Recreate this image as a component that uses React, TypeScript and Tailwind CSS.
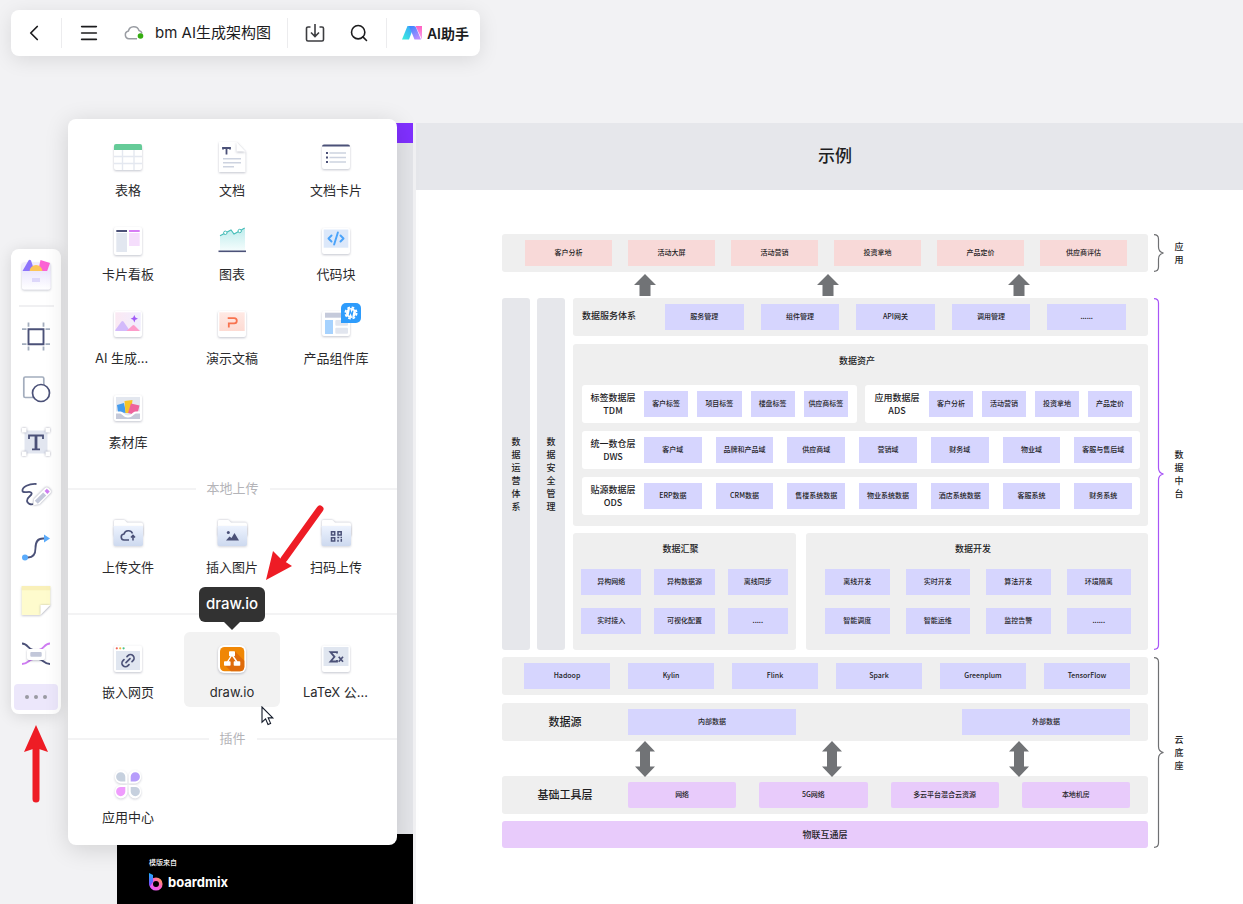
import type { ReactNode } from 'react';
import clsx from 'clsx';
import { ChevronLeft, CodeXml, Link2, Menu, Search } from 'lucide-react';

const INK = '#4b5178';

/* ---------- shared icon frame ---------- */

function Icon({ children }: { children: ReactNode }) {
  return (
    <svg
      viewBox="0 0 36 36"
      aria-hidden="true"
      className="w-9 h-9 shrink-0 overflow-visible"
      fill="none"
    >
      {children}
    </svg>
  );
}

// White paper card with a soft shadow, used under most of the icons
function Card({ y = 4, h = 27, rx = 2 }: { y?: number; h?: number; rx?: number }) {
  return (
    <rect
      x="4"
      y={y}
      width="28"
      height={h}
      rx={rx}
      fill="#fff"
      className="drop-shadow-[0_1px_1px_rgba(40,45,80,0.28)]"
    />
  );
}

/* ---------- insert panel icons ---------- */

const tableIcon = (
  <Icon>
    <Card y={6} h={25} />
    <path d="M4 7a2 2 0 0 1 2-2h24a2 2 0 0 1 2 2v4H4z" fill="#65cb98" />
    <path d="M4 17.500h28M4 24.500h28M12.500 11V31M24 11V31" stroke="#e4e8f0" strokeWidth="1.400" />
  </Icon>
);

const docIcon = (
  <Icon>
    <path
      d="M5 3h17.500l9 9.500V33H5z"
      fill="#fff"
      className="drop-shadow-[0_1px_1px_rgba(40,45,80,0.28)]"
    />
    <path d="M22.500 3v9.500h9z" fill="#fff" className="drop-shadow-[0_1px_1px_rgba(40,45,80,0.3)]" />
    <path d="M9 10.500V9h7v1.500M12.500 9v6.500" stroke={INK} strokeWidth="1.800" />
    <path d="M9 19.700h18M9 23.700h18M9 27.700h11" stroke="#cdd3e0" strokeWidth="1.500" />
  </Icon>
);

const docCardIcon = (
  <Icon>
    <Card y={6} h={24} />
    <path d="M4 7.500a2 2 0 0 1 2-2h24a2 2 0 0 1 2 2z" fill={INK} />
    <path d="M8 14h2M8 18.500h2M8 23h2" stroke={INK} strokeWidth="1.800" />
    <path d="M11.500 14H28M11.500 18.500H28M11.500 23H28" stroke="#cdd3e0" strokeWidth="1.500" />
  </Icon>
);

const kanbanIcon = (
  <Icon>
    <Card y={4} h={28} />
    <path d="M6.300 7H17v2H6.300z" fill={INK} />
    <path d="M19 7h10.700v2H19z" fill="#d77df5" />
    <path d="M6.300 10H17v19H6.300z" fill="#e2e7f0" />
    <path d="M19 10h10.700v13H19z" fill="#f5defc" />
  </Icon>
);

const chartIcon = (
  <Icon>
    <defs>
      <linearGradient id="chartFill" x1="0" y1="0" x2="0" y2="1">
        <stop offset="0" stopColor="#bdecec" />
        <stop offset="1" stopColor="#f6fdfd" />
      </linearGradient>
    </defs>
    <path d="M6 12.700L11.300 10 17 7l3 4 6-3.300L31 5v23H6z" fill="url(#chartFill)" />
    <path d="M6 12.700L11.300 10 17 7l3 4 6-3.300L30.700 5" stroke="#45bdb8" strokeWidth="1.100" />
    <circle cx="11.300" cy="9.800" r="1.700" fill="#fff" stroke="#45bdb8" />
    <circle cx="25.700" cy="8" r="1.700" fill="#fff" stroke="#45bdb8" />
    <path d="M4.500 28.300h27.500" stroke={INK} strokeWidth="1.600" />
  </Icon>
);

const codeIcon = (
  <Icon>
    <Card y={5} h={26} />
    <path d="M5.700 6.500h24.600v18.200H5.700z" fill="#dce8fa" />
    <CodeXml x={9} y={6.500} width={18} height={18} color="#4aa3fa" strokeWidth={2.6} />
  </Icon>
);

const aiImageIcon = (
  <Icon>
    <defs>
      <linearGradient id="aiSky" x1="0" y1="0" x2="1" y2="0">
        <stop offset="0" stopColor="#fbe9f3" />
        <stop offset="1" stopColor="#f0edfe" />
      </linearGradient>
    </defs>
    <Card y={4} h={26} />
    <path d="M5.300 5.300h25.400V24H5.300z" fill="url(#aiSky)" />
    <path d="M5.300 23L11.500 14.500q1-1.200 2 0L20 24H5.300z" fill="#d3bafb" />
    <path d="M16.500 24l6-5.500q1-1 2 0l5.500 5.500z" fill="#fd9cca" />
    <path d="M24.300 8l1.100 2.600L28 11.700l-2.600 1.100-1.100 2.600-1.100-2.600-2.600-1.100 2.600-1.100z" fill="#a05af7" />
  </Icon>
);

const slidesIcon = (
  <Icon>
    <defs>
      <linearGradient id="slideFill" x1="0" y1="0" x2="0" y2="1">
        <stop offset="0" stopColor="#ffe9e4" />
        <stop offset="1" stopColor="#fddbd3" />
      </linearGradient>
    </defs>
    <Card y={4} h={26} />
    <path d="M5.300 5.300h25.400V24H5.300z" fill="url(#slideFill)" />
    <path d="M13.700 11.200h6.500a2.300 2.300 0 0 1 0 5.200h-5.400v4" stroke="#f8734f" strokeWidth="1.800" />
  </Icon>
);

const componentsIcon = (
  <Icon>
    <Card y={4} h={25} />
    <path d="M7 5.700h20v5H7z" fill="#c5cadb" />
    <path d="M7 13h8v14H7z" fill="#a6d2fe" />
    <rect x="17.300" y="13" width="12.700" height="5.700" rx="1" fill="#e2e6ef" />
    <rect x="17.300" y="20.700" width="12.700" height="6" rx="1" fill="#e2e6ef" />
    <path d="M23 16V1a5 5 0 0 1 5-5h10a5 5 0 0 1 5 5v10a5 5 0 0 1-5 5z" fill="#2e9cfc" />
    <circle cx="33" cy="6" r="5" fill="#fff" />
    <circle cx="33" cy="6" r="5.600" stroke="#fff" strokeWidth="1.800" strokeDasharray="2.600 1.798" />
    <path d="M31.300 8.300l.9-4.600 1.800 4.600.9-4.600" stroke="#2e9cfc" strokeWidth="1.300" />
  </Icon>
);

const assetsIcon = (
  <Icon>
    <Card y={4} h={26} />
    <path d="M6 6h24v22H6z" fill="#e3e7ef" />
    <path d="M7 14l7-2 2 10-8-1z" fill="#459bec" />
    <path d="M14.500 10l8-1-1.500 13h-5.500z" fill="#f6c429" />
    <path d="M21 12.500l8.500 2-1.500 6-6 2.500-4-1z" fill="#ee639c" />
    <path d="M6 20.500h4.500c3 0 3.500 4 7.500 4s4.500-4 7.500-4H30V28H6z" fill="#fff" />
    <path d="M6 22.500h4c2 0 3.500 4 8 4s6-4 8-4h4V28H6z" fill="#c5c9d9" />
  </Icon>
);

function Folder({ children }: { children: ReactNode }) {
  return (
    <Icon>
      <defs>
        <linearGradient id="folderFill" x1="0" y1="0" x2="0" y2="1">
          <stop offset="0" stopColor="#edf3fe" />
          <stop offset="1" stopColor="#cdd9ef" />
        </linearGradient>
      </defs>
      <path
        d="M4 5a1 1 0 0 1 1-1h9.500l2.500 2.500h14a2 2 0 0 1 2 2V20H4z"
        fill="#fff"
        className="drop-shadow-[0_0_1px_rgba(40,45,80,0.35)]"
      />
      <path
        d="M3.500 10h29.500v18a2 2 0 0 1-2 2H5.500a2 2 0 0 1-2-2z"
        fill="url(#folderFill)"
        className="drop-shadow-[0_1px_1px_rgba(40,45,80,0.2)]"
      />
      {children}
    </Icon>
  );
}

const uploadIcon = (
  <Folder>
    <path
      d="M19 24h-4.500a3 3 0 0 1-.5-6 4.500 4.500 0 0 1 8.500-.5M23 24.500v-4.500M21 21.500l2-2 2 2"
      stroke={INK}
      strokeWidth="1.600"
    />
  </Folder>
);

const insertImageIcon = (
  <Folder>
    <path d="M12 24.500l3.500-4 2 1.500 3-5 4.500 7.500z" fill={INK} />
    <circle cx="14.300" cy="16.500" r="1.500" fill={INK} />
  </Folder>
);

const qrIcon = (
  <Folder>
    <path d="M13.500 15.800h3.200V19h-3.200zM20 15.800h3.200V19H20zM13.500 21.800h3.200V25h-3.200z" stroke={INK} strokeWidth="1.500" />
    <path d="M19.300 21.500h2M22.500 21.500H24M23.300 23v2.700M20 23.700v2" stroke={INK} strokeWidth="1.500" />
  </Folder>
);

const embedIcon = (
  <Icon>
    <Card y={4.5} h={26.5} />
    <circle cx="6.800" cy="7.300" r="1.100" fill="#f0645a" />
    <circle cx="10.200" cy="7.300" r="1.100" fill="#f5b83d" />
    <circle cx="13.600" cy="7.300" r="1.100" fill="#4cc38a" />
    <path d="M6 10h24v19H6z" fill="#e0e6f0" />
    <g transform="rotate(-45 18 19.700)">
      <Link2 x={9.5} y={11.2} width={17} height={17} color={INK} strokeWidth={2.4} />
    </g>
  </Icon>
);

const drawioIcon = (
  <Icon>
    <rect x="4" y="4" width="28" height="28" rx="6" fill="#fff" className="drop-shadow-[0_1px_1px_rgba(40,45,80,0.28)]" />
    <rect x="6" y="6" width="24.300" height="24.300" rx="4.500" fill="#f08705" />
    <path d="M21 10.500l9.300 9.300V26a4.500 4.500 0 0 1-4.300 4.300H17l-6-6 6-8z" fill="#df6c0c" />
    <path d="M17.500 14.500L13.500 21M18.500 14.500l4.500 6.500" stroke="#fff" strokeWidth="1.400" />
    <rect x="15" y="10.300" width="6" height="5" rx="0.800" fill="#fff" />
    <rect x="10" y="20.200" width="6.600" height="4.600" rx="0.800" fill="#fff" />
    <rect x="19.700" y="20.200" width="6.600" height="4.600" rx="0.800" fill="#fff" />
  </Icon>
);

const latexIcon = (
  <Icon>
    <Card y={4.5} h={26.5} />
    <path d="M5.500 6h25v19h-25z" fill="#e0e6f0" />
    <path d="M19 12.500v-1.400h-6.500l4 4.700-4 4.700H19v-1.400" stroke={INK} strokeWidth="1.800" />
    <path d="M20.700 15.700l4.300 5M25 15.700l-4.300 5" stroke={INK} strokeWidth="1.700" />
  </Icon>
);

const appsIcon = (
  <Icon>
    <g fill="#fff" className="drop-shadow-[0_1px_1px_rgba(40,45,80,0.22)]">
      <path d="M10.700 4a6.800 6.800 0 0 1 6.800 6.800v6.700h-6.800a6.800 6.800 0 0 1 0-13.500z" />
      <path d="M25.300 4a6.800 6.800 0 0 0-6.800 6.800v6.700h6.800a6.800 6.800 0 0 0 0-13.500z" />
      <path d="M10.700 32.500a6.800 6.800 0 0 0 6.800-6.800V19h-6.800a6.800 6.800 0 0 0 0 13.500z" />
      <path d="M25.300 32.500a6.800 6.800 0 0 1-6.800-6.800V19h6.800a6.800 6.800 0 0 1 0 13.500z" />
    </g>
    <path d="M10.700 6.200a4.600 4.600 0 0 1 4.600 4.600v4.600h-4.600a4.600 4.600 0 0 1 0-9.200z" fill="#c6d0de" />
    <path d="M25.300 6.200a4.600 4.600 0 0 0-4.600 4.600v4.600h4.600a4.600 4.600 0 0 0 0-9.200z" fill="#b69cfb" />
    <path d="M10.700 30.200a4.600 4.600 0 0 0 4.600-4.600V21h-4.600a4.600 4.600 0 0 0 0 9.200z" fill="#ef9cfd" />
    <path d="M25.300 30.200a4.600 4.600 0 0 1-4.600-4.600V21h4.600a4.600 4.600 0 0 1 0 9.200z" fill="#c6d0de" />
  </Icon>
);

/* ---------- left tool bar icons ---------- */

const tools = [
  {
    name: '画框',
    icon: (
      <Icon>
        <path
          d="M4 11.200h4.500M27.500 11.200H32M4 26.200h4.500M27.500 26.200H32M10.500 4.500v4.200M25.500 4.500v4.200M10.500 28.500v4M25.500 28.500v4"
          stroke="#a3adbd"
          strokeWidth="1.800"
        />
        <path d="M10.500 11.200h15v15h-15z" fill="#fff" stroke={INK} strokeWidth="1.900" />
      </Icon>
    ),
  },
  {
    name: '图形',
    icon: (
      <Icon>
        <rect x="5.800" y="6" width="20" height="20.500" rx="1.500" fill="#fff" stroke="#a3adbd" strokeWidth="1.700" />
        <circle cx="23" cy="22" r="8.500" fill="#fff" stroke={INK} strokeWidth="1.700" />
      </Icon>
    ),
  },
  {
    name: '文本',
    icon: (
      <Icon>
        <path d="M6.500 6.500h23v23h-23z" fill="#e2e6f0" />
        <g fill="#fff" className="drop-shadow-[0_0_1px_rgba(40,45,80,0.45)]">
          <path d="M4 4h4.500v4.500H4zM27.500 4H32v4.500h-4.500zM4 27.500h4.500V32H4zM27.500 27.500H32V32h-4.500z" />
        </g>
        <path d="M11 15v-3.500h14V15M14 25.300h8" stroke={INK} strokeWidth="1.800" />
        <path d="M18 11.500v14" stroke={INK} strokeWidth="2.800" />
      </Icon>
    ),
  },
  {
    name: '画笔',
    icon: (
      <Icon>
        <path d="M18.500 7C11 6.500 4 10 4.500 14c.5 3 9-1 9.200 2.500C13.800 19 8.500 20 9 24c.4 2.500 3.500 4 6.500 3" stroke={INK} strokeWidth="1.800" />
        <path
          d="M15.200 28.300l.8-6.300L27 11a2.500 2.500 0 0 1 3.500 0l1.800 1.800a2.500 2.500 0 0 1 0 3.500L21.500 27.300z"
          fill="#fff"
          className="drop-shadow-[0_0_1px_rgba(40,45,80,0.5)]"
        />
        <path d="M18.300 25.300L26.700 16.900" stroke="#c2c7d9" strokeWidth="4.200" />
        <path d="M28 15.500l2.300-2.300" stroke="#cf7cf2" strokeWidth="4" />
      </Icon>
    ),
  },
  {
    name: '连接线',
    icon: (
      <Icon>
        <path d="M7 27.500h3c5.500 0 7.500-3 7.500-9.500s2-9.500 7.500-9.500h2" stroke={INK} strokeWidth="1.800" />
        <circle cx="7" cy="27.500" r="3" fill="#5aabfb" />
        <path d="M26 4.500l6 4-6 4z" fill="#5aabfb" />
      </Icon>
    ),
  },
  {
    name: '便签',
    icon: (
      <Icon>
        <path d="M3.700 3h28.600v19L22 32H3.700z" fill="#fefbcd" className="drop-shadow-[0_1px_1px_rgba(40,45,80,0.25)]" />
        <path d="M3.700 3h28.600v4.300H3.700z" fill="#f9f0b9" />
        <path d="M22.500 22h9.800L22.500 32z" fill="#fff" className="drop-shadow-[0_0_1px_rgba(40,45,80,0.3)]" />
      </Icon>
    ),
  },
  {
    name: '思维导图',
    icon: (
      <Icon>
        <path d="M4 7.500c6 0 6 6 11 6.500M32 28c-6 0-6-4-11-5" stroke={INK} strokeWidth="1.800" />
        <path d="M4 28c6 0 6-4 11-5M32 7.500c-6 0-6 6-11 6.500" stroke="#cf7cf2" strokeWidth="1.800" />
        <rect x="9" y="13" width="18" height="11" rx="2" fill="#fff" className="drop-shadow-[0_1px_1px_rgba(40,45,80,0.3)]" />
        <rect x="12.300" y="16" width="11.400" height="4.700" rx="1" fill="#c2c7d9" />
      </Icon>
    ),
  },
];

const libraryIcon = (
  <Icon>
    <defs>
      <linearGradient id="boxFill" x1="0" y1="0" x2="0" y2="1">
        <stop offset="0" stopColor="#ebe7fd" />
        <stop offset="1" stopColor="#fff" />
      </linearGradient>
    </defs>
    <rect x="4" y="6.500" width="28.500" height="27" rx="2" fill="#efecfd" className="drop-shadow-[0_1px_1px_rgba(40,45,80,0.28)]" />
    <path d="M4.500 15L10.500 4.500q1-1.500 2.500 0L16.500 15z" fill="#8d74fb" />
    <path d="M22.500 4l9.500 3-3 8.500h-9z" fill="#fb62d4" />
    <path d="M11.500 15.500a6.500 6.500 0 0 1 13 0z" fill="#fcc659" />
    <path d="M4 15h28.500v16.500a2 2 0 0 1-2 2H6a2 2 0 0 1-2-2z" fill="url(#boxFill)" />
    <path d="M14 22h8v4h-8z" fill="#ddd7fa" />
  </Icon>
);

/* ---------- top bar ---------- */

const barButton = 'flex items-center justify-center h-9 cursor-pointer';

function TopBar() {
  return (
    <header className="absolute left-[11px] top-[10px] h-[46px] flex items-center rounded-lg bg-white shadow-[0_4px_20px_rgba(0,0,0,0.10)] text-[#1c1c1e]">
      <button type="button" aria-label="返回" className={clsx(barButton, 'w-[50px] pr-1')}>
        <ChevronLeft size={26} strokeWidth={1.6} />
      </button>
      <span className="w-px h-[30px] bg-[#ececee]" />
      <button type="button" aria-label="菜单" className={clsx(barButton, 'w-[54px]')}>
        <Menu size={22} strokeWidth={1.8} />
      </button>
      <svg width="20" height="16" viewBox="0 0 20 16" fill="none" aria-hidden="true" className="ml-2">
        <path
          d="M13 13.700H5a3.900 3.900 0 0 1-.6-7.700A5.500 5.500 0 0 1 15 5.500c1.700.4 2.700 1.600 3 3"
          stroke="#9a9da3"
          strokeWidth="1.500"
        />
        <circle cx="16.500" cy="11" r="2.800" fill="#35ad11" />
      </svg>
      <h1 className="ml-[11px] text-[15px] leading-5">bm AI生成架构图</h1>
      <span className="w-px h-[30px] bg-[#ececee] ml-4" />
      <button type="button" aria-label="导出" className={clsx(barButton, 'w-[54px]')}>
        <svg width="20" height="20" viewBox="0 0 20 20" fill="none" stroke="#3c3d40" strokeWidth="1.600" aria-hidden="true">
          <path d="M5.500 4H3a1.500 1.500 0 0 0-1.500 1.500v11A1.500 1.500 0 0 0 3 18h14a1.500 1.500 0 0 0 1.500-1.500v-11A1.500 1.500 0 0 0 17 4h-2.500M10 1v12M6 9.500l4 4 4-4" />
        </svg>
      </button>
      <button type="button" aria-label="搜索" className={clsx(barButton, 'w-[34px]')}>
        <Search size={20} strokeWidth={1.9} />
      </button>
      <span className="w-px h-[30px] bg-[#ececee] ml-[10px]" />
      <button type="button" className={clsx(barButton, 'gap-1 pl-[15px] pr-[11px] text-[14px] font-semibold')}>
        <svg width="21" height="14" viewBox="0 0 21 14" aria-hidden="true">
          <defs>
            <linearGradient id="aiLeft" x1="0" y1="1" x2="1" y2="0">
              <stop offset="0" stopColor="#3af0dc" />
              <stop offset="1" stopColor="#3a9bff" />
            </linearGradient>
            <linearGradient id="aiMid" x1="0" y1="0" x2="0.600" y2="1">
              <stop offset="0" stopColor="#2f86ff" />
              <stop offset="1" stopColor="#b98cff" />
            </linearGradient>
            <linearGradient id="aiRight" x1="0" y1="0" x2="0" y2="1">
              <stop offset="0" stopColor="#ff5fc0" />
              <stop offset="1" stopColor="#f7a6ee" />
            </linearGradient>
          </defs>
          <path d="M20 0v13.500L13.500 0z" fill="url(#aiRight)" />
          <path d="M5.500 0H12L7 13.500H0z" fill="url(#aiLeft)" />
          <path d="M7 0h5q1.500 0 2 1.500L19 13.500h-6.500z" fill="url(#aiMid)" />
        </svg>
        AI助手
      </button>
    </header>
  );
}

/* ---------- left tool bar ---------- */

function ToolBar() {
  return (
    <nav
      aria-label="工具栏"
      className="absolute left-[11px] top-[249px] w-[50px] pt-[7px] pb-1 flex flex-col items-center rounded-lg bg-white shadow-[0_2px_16px_rgba(0,0,0,0.12)]"
    >
      <button type="button" aria-label="素材">{libraryIcon}</button>
      <span className="w-[35px] h-[2px] mt-[13px] mb-[11px] bg-[#f0f0f2]" />
      <div className="flex flex-col gap-[17px]">
        {tools.map((tool) => (
          <button key={tool.name} type="button" aria-label={tool.name}>
            {tool.icon}
          </button>
        ))}
      </div>
      <button
        type="button"
        aria-label="更多"
        className="mt-3 w-11 h-[26px] rounded bg-[#ece7fb] flex items-center justify-center gap-[5px]"
      >
        <span className="w-1 h-1 rounded-full bg-[#9a9aa2]" />
        <span className="w-1 h-1 rounded-full bg-[#9a9aa2]" />
        <span className="w-1 h-1 rounded-full bg-[#9a9aa2]" />
      </button>
      <svg width="24" height="78" viewBox="0 0 24 78" aria-hidden="true" className="absolute top-full left-[13px] mt-[11px]">
        <path d="M12 20v54" stroke="#ee1c25" strokeWidth="7" strokeLinecap="round" />
        <path d="M12 0l12 27-12-4-12 4z" fill="#ee1c25" />
      </svg>
    </nav>
  );
}

/* ---------- insert panel ---------- */

type Entry = { label: string; icon: ReactNode; tip?: string };

const basics: Entry[] = [
  { label: '表格', icon: tableIcon },
  { label: '文档', icon: docIcon },
  { label: '文档卡片', icon: docCardIcon },
  { label: '卡片看板', icon: kanbanIcon },
  { label: '图表', icon: chartIcon },
  { label: '代码块', icon: codeIcon },
  { label: 'AI 生成...', icon: aiImageIcon },
  { label: '演示文稿', icon: slidesIcon },
  { label: '产品组件库', icon: componentsIcon },
  { label: '素材库', icon: assetsIcon },
];

const uploads: Entry[] = [
  { label: '上传文件', icon: uploadIcon },
  { label: '插入图片', icon: insertImageIcon },
  { label: '扫码上传', icon: qrIcon },
];

const embeds: Entry[] = [
  { label: '嵌入网页', icon: embedIcon },
  { label: 'draw.io', icon: drawioIcon, tip: 'draw.io' },
  { label: 'LaTeX 公...', icon: latexIcon },
];

function EntryGrid({ entries }: { entries: Entry[] }) {
  return (
    <div className="grid grid-cols-3 gap-x-2 gap-y-[9px] pl-3 pr-[13px]">
      {entries.map((entry) => (
        <button
          key={entry.label}
          type="button"
          className={clsx(
            'relative h-[75px] pt-[9px] flex flex-col items-center gap-[5px] rounded-md',
            entry.tip && 'bg-[#f2f2f2]',
          )}
        >
          {entry.icon}
          <span
            className={clsx(
              'text-[13px] leading-5 whitespace-nowrap text-[#2a2a2c]',
              // shortened labels fill the text box and start at its left edge
              entry.label.endsWith('...') && 'w-[66px] text-left',
            )}
          >
            {entry.label}
          </span>
          {entry.tip && (
            <span
              role="tooltip"
              className="absolute bottom-full mb-[10px] w-[66px] h-[35px] flex items-center justify-center rounded-md bg-[#323232] text-[15px] font-medium text-white"
            >
              {entry.tip}
              <svg width="16" height="8" viewBox="0 0 16 8" aria-hidden="true" className="absolute top-full">
                <path d="M0 0h16L8 8z" fill="#323232" />
              </svg>
            </span>
          )}
        </button>
      ))}
    </div>
  );
}

function Divider({ label }: { label?: string }) {
  return (
    <div className="flex items-center h-5 mt-[22px] mb-2 text-[13px] text-[#b4b4b8]">
      <span className="flex-1 h-[2px] bg-[#f3f3f4]" />
      {label && <span className="px-[11px]">{label}</span>}
      <span className="flex-1 h-[2px] bg-[#f3f3f4]" />
    </div>
  );
}

function InsertPanel() {
  return (
    <section
      aria-label="更多工具"
      className="absolute left-[68px] top-[119px] w-[329px] pt-[11px] pb-[13px] rounded-lg bg-white shadow-[0_4px_24px_rgba(0,0,0,0.14)]"
    >
      <EntryGrid entries={basics} />
      <Divider label="本地上传" />
      <EntryGrid entries={uploads} />
      <Divider />
      <EntryGrid entries={embeds} />
      <Divider label="插件" />
      <EntryGrid entries={[{ label: '应用中心', icon: appsIcon }]} />

      <svg width="60" height="76" viewBox="0 0 60 76" aria-hidden="true" className="absolute left-[196px] top-[386px]">
        <path d="M56 4L20 54" stroke="#ee1c25" strokeWidth="7" strokeLinecap="round" />
        <path d="M2 75L9 46l8 8 11 7z" fill="#ee1c25" />
      </svg>
      <svg width="14" height="20" viewBox="0 0 14 20" aria-hidden="true" className="absolute left-[193px] top-[587px]">
        <path d="M1 1v15.200l3.600-3.300 2.400 5.600 2.600-1.100-2.400-5.500h4.600z" fill="#fff" stroke="#111827" strokeWidth="1.100" />
      </svg>
    </section>
  );
}

/* ---------- canvas: architecture diagram ---------- */

type Tone = 'red' | 'blue' | 'pink';

const tones: Record<Tone, string> = {
  red: 'bg-[#f8d9d8]',
  blue: 'bg-[#d6d5fe]',
  pink: 'bg-[#e8cbfb] rounded-[2px]',
};

function Chips({ items, tone = 'blue', className }: { items: string[]; tone?: Tone; className: string }) {
  return (
    <div className={clsx('flex-1 grid', className)}>
      {items.map((item) => (
        <span
          key={item}
          className={clsx(
            'h-[26px] pb-px flex items-center justify-center text-[7px] font-medium whitespace-nowrap',
            tones[tone],
          )}
        >
          {item}
        </span>
      ))}
    </div>
  );
}

function Layer({ name, code, wide, children }: { name: string; code: string; wide?: boolean; children: ReactNode }) {
  return (
    <div className="flex-1 h-[38px] flex items-center rounded-[3px] bg-white">
      <div className={clsx('text-center text-[9px] leading-[13px] font-medium', wide ? 'w-16' : 'w-[62px]')}>
        {name}
        <br />
        {code}
      </div>
      {children}
    </div>
  );
}

// Curly brace that closes a group of rows on its right side
function Brace({ height, color }: { height: number; color: string }) {
  const mid = height / 2;
  return (
    <svg width="10" height={height} viewBox={`0 0 10 ${height}`} fill="none" aria-hidden="true" className="ml-[6px] shrink-0">
      <path
        d={`M0 .700Q4.500 .700 4.500 5V${mid - 6}Q4.500 ${mid - 1} 9.500 ${mid}Q4.500 ${mid + 1} 4.500 ${mid + 6}V${height - 5}Q4.500 ${height - 0.7} 0 ${height - 0.7}`}
        stroke={color}
        strokeWidth="1.200"
      />
    </svg>
  );
}

function Group({ label, height, color = '#6f7073', children }: { label: string; height: number; color?: string; children: ReactNode }) {
  return (
    <div className="flex items-center">
      <div className="flex-1">{children}</div>
      <Brace height={height} color={color} />
      <span className="ml-[9px] w-3 text-center text-[9px] leading-[13px] font-medium">{label}</span>
    </div>
  );
}

function UpArrow() {
  return (
    <svg width="22" height="22" viewBox="0 0 22 22" aria-hidden="true">
      <path d="M11 0l11 11h-5.500v11h-11V11H0z" fill="#717376" />
    </svg>
  );
}

function UpDownArrow() {
  return (
    <svg width="20" height="36" viewBox="0 0 20 36" aria-hidden="true">
      <path d="M10 0l10 10.500h-5v15h5L10 36 0 25.500h5v-15H0z" fill="#717376" />
    </svg>
  );
}

const row = 'h-[38px] flex items-center rounded-[3px] bg-[#efefef]';
const panelTitle = 'text-center text-[9px] leading-[13px] font-medium pr-2';
const sideBar = 'w-7 shrink-0 flex items-center justify-center rounded-[3px] bg-[#e6e7eb]';
const rowTitle = 'w-[126px] pb-px text-center text-[11px] font-medium';

function Diagram() {
  return (
    <div className="pl-[86px] pr-[58px] pt-11 font-['Noto_Sans_CJK_SC',sans-serif] text-[#1d1d1f]">
      <Group label="应用" height={38}>
        <div className={row}>
          <Chips
            tone="red"
            className="grid-cols-6 gap-4 pl-[23px] pr-[21px]"
            items={['客户分析', '活动大屏', '活动营销', '投资拿地', '产品定价', '供应商评估']}
          />
        </div>
      </Group>

      <div className="h-[26px] mr-[37px] pl-[132px] grid grid-cols-[183fr_191fr_140fr] items-center">
        <UpArrow />
        <UpArrow />
        <UpArrow />
      </div>

      <Group label="数据中台" height={352} color="#a855f7">
        <div className="flex text-[9px] leading-[13px] font-medium">
          <div className={sideBar}>
            <span className="w-[9px]">数据运营体系</span>
          </div>
          <div className={clsx(sideBar, 'ml-[7px]')}>
            <span className="w-[9px]">数据安全管理</span>
          </div>
          <div className="flex-1 ml-2">
            <div className={row}>
              <h3 className="w-[92px] pl-[9px] pb-1">数据服务体系</h3>
              <Chips
                className="grid-cols-5 gap-[17px] pr-[22px]"
                items={['服务管理', '组件管理', 'API网关', '调用管理', '......']}
              />
            </div>

            <div className="mt-2 pt-[10px] pb-[11px] pl-[9px] pr-2 rounded-[3px] bg-[#efefef]">
              <h3 className={panelTitle}>数据资产</h3>
              <div className="mt-[18px] flex flex-col gap-2">
                <div className="flex gap-2">
                  <Layer name="标签数据层" code="TDM">
                    <Chips className="grid-cols-4 gap-[9px] pr-[9px]" items={['客户标签', '项目标签', '楼盘标签', '供应商标签']} />
                  </Layer>
                  <Layer name="应用数据层" code="ADS" wide>
                    <Chips className="grid-cols-4 gap-[9px] pr-2" items={['客户分析', '活动营销', '投资拿地', '产品定价']} />
                  </Layer>
                </div>
                <div className="flex">
                  <Layer name="统一数仓层" code="DWS">
                    <Chips
                      className="grid-cols-7 gap-[14px] pr-2"
                      items={['客户域', '品牌和产品域', '供应商域', '营销域', '财务域', '物业域', '客服与售后域']}
                    />
                  </Layer>
                </div>
                <div className="flex">
                  <Layer name="贴源数据层" code="ODS">
                    <Chips
                      className="grid-cols-7 gap-[14px] pr-2"
                      items={['ERP数据', 'CRM数据', '售楼系统数据', '物业系统数据', '酒店系统数据', '客服系统', '财务系统']}
                    />
                  </Layer>
                </div>
              </div>
            </div>

            <div className="mt-[7px] grid grid-cols-[223fr_342fr] gap-[10px]">
              <div className="pt-[9px] pb-4 rounded-[3px] bg-[#efefef]">
                <h3 className={panelTitle}>数据汇聚</h3>
                <Chips
                  className="mt-[14px] grid-cols-3 gap-x-[13px] gap-y-[13px] px-2"
                  items={['异构网络', '异构数据源', '离线同步', '实时接入', '可视化配置', '.....']}
                />
              </div>
              <div className="pt-[9px] pb-4 rounded-[3px] bg-[#efefef]">
                <h3 className={panelTitle}>数据开发</h3>
                <Chips
                  className="mt-[14px] grid-cols-4 gap-x-4 gap-y-[13px] pl-[19px] pr-[17px]"
                  items={['离线开发', '实时开发', '算法开发', '环境隔离', '智能调度', '智能运维', '监控告警', '......']}
                />
              </div>
            </div>
          </div>
        </div>
      </Group>

      <div className="h-[7px]" />

      <Group label="云底座" height={191}>
        <div className={row}>
          <Chips
            className="grid-cols-6 gap-[18px] pl-[22px] pr-[18px]"
            items={['Hadoop', 'Kylin', 'Flink', 'Spark', 'Greenplum', 'TensorFlow']}
          />
        </div>
        <div className={clsx(row, 'mt-2')}>
          <h3 className={rowTitle}>数据源</h3>
          <Chips className="grid-cols-[168fr_168fr] gap-[166px] pr-[18px]" items={['内部数据', '外部数据']} />
        </div>
        <div className="h-[35px] pl-[133px] grid grid-cols-[187fr_187fr_139fr] items-center">
          <UpDownArrow />
          <UpDownArrow />
          <UpDownArrow />
        </div>
        <div className={row}>
          <h3 className={rowTitle}>基础工具层</h3>
          <Chips
            tone="pink"
            className="grid-cols-4 gap-[23px] pr-[18px]"
            items={['网络', '5G网络', '多云平台混合云资源', '本地机房']}
          />
        </div>
        <div className="mt-[7px] h-[27px] flex items-center justify-center rounded-[3px] bg-[#e8cbfb] text-[9px] font-medium">
          物联互通层
        </div>
      </Group>
    </div>
  );
}

/* ---------- page ---------- */

export default function App() {
  return (
    <main className="relative h-screen overflow-hidden bg-[#f2f2f4] font-[Inter,'Noto_Sans_CJK_SC',sans-serif]">
      <div className="h-full flex gap-[3px] pl-[117px] pt-[123px]">
        <section aria-label="封面" className="w-[296px] shrink-0 flex flex-col">
          <div className="h-5 bg-[#8030ff]" />
          <div className="h-[691px] shrink-0 bg-[#e5e6ea]" />
          <div className="flex-1 bg-black text-white pl-8 pt-[22px]">
            <p className="text-[7px] leading-[13px] font-medium">模版来自</p>
            <div className="mt-1 flex items-center gap-[5px]">
              <svg width="14" height="18" viewBox="0 0 14 18" fill="none" aria-hidden="true">
                <defs>
                  <linearGradient id="brandStem" x1="0" y1="0" x2="0" y2="1">
                    <stop offset="0" stopColor="#19b5fe" />
                    <stop offset="1" stopColor="#8a3cff" />
                  </linearGradient>
                  <linearGradient id="brandBowl" x1="1" y1="0" x2="0" y2="1">
                    <stop offset="0" stopColor="#ff9a5c" />
                    <stop offset="0.400" stopColor="#ff5fc4" />
                    <stop offset="1" stopColor="#e65cff" />
                  </linearGradient>
                </defs>
                <circle cx="7" cy="11" r="4.800" stroke="url(#brandBowl)" strokeWidth="3.600" />
                <path d="M0 0l4 2v7L1 13.500Q0 12 0 10z" fill="url(#brandStem)" />
              </svg>
              <span className="text-[13px] leading-[18px] font-bold">boardmix</span>
            </div>
          </div>
        </section>

        <section aria-label="示例" className="flex-1 bg-white">
          <h2 className="h-[67px] pl-[11px] pt-px flex items-center justify-center bg-[#e6e7eb] text-[17px] font-medium text-[#1d1d1f]">
            示例
          </h2>
          <Diagram />
        </section>
      </div>

      <TopBar />
      <ToolBar />
      <InsertPanel />
    </main>
  );
}
